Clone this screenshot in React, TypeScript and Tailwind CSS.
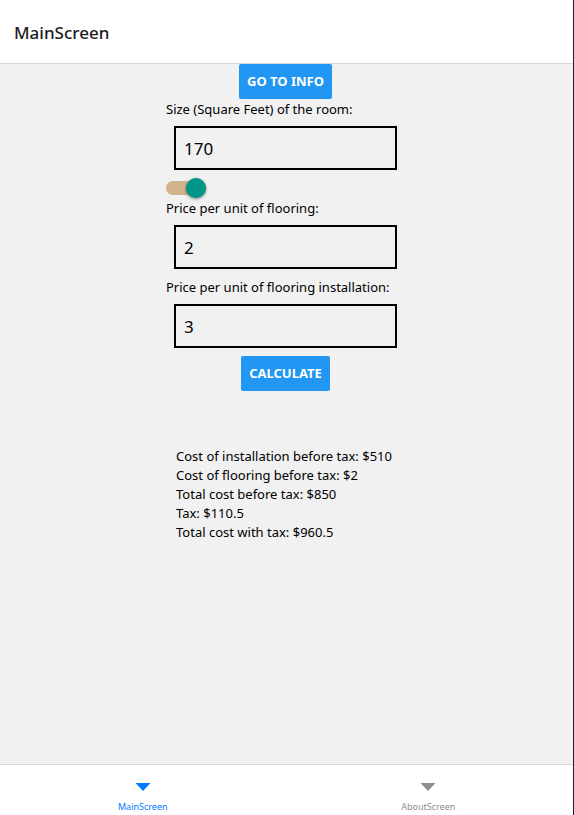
import { useState } from "react";

type FieldProps = { id: string; label: string; value: string; onChange: (v: string) => void };

function Field({ id, label, value, onChange }: FieldProps) {
  return (
    <div className="flex flex-col">
      <label htmlFor={id} className="text-[13px] leading-5 whitespace-nowrap">
        {label}
      </label>
      <input
        id={id}
        type="text"
        inputMode="decimal"
        value={value}
        onChange={(e) => onChange(e.target.value)}
        className="mx-2 mt-[7px] mb-2 h-11 border-2 border-black bg-transparent px-2 text-[17px] outline-none"
      />
    </div>
  );
}

function ActionButton({ children, onClick }: { children: string; onClick?: () => void }) {
  return (
    <button
      type="button"
      onClick={onClick}
      className="self-center rounded-xs bg-[#2196f3] p-2 text-[13px] leading-[19px] font-bold text-white uppercase"
    >
      {children}
    </button>
  );
}

function Tab({ label, active }: { label: string; active?: boolean }) {
  return (
    <a
      href={"#" + label}
      className={
        "flex flex-1 flex-col items-center gap-2 pt-[18px] " + (active ? "text-[#007aff]" : "text-[#8e8e8f]")
      }
    >
      <svg width="16" height="8" viewBox="0 0 16 8" fill="currentColor" aria-hidden="true">
        <path d="M0.5 0H15.5L8 8Z" />
      </svg>
      <span className="text-[9px] leading-4">{label}</span>
    </a>
  );
}

export default function App() {
  const [size, setSize] = useState("170");
  const [price, setPrice] = useState("2");
  const [install, setInstall] = useState("3");
  const [on, setOn] = useState(true);

  return (
    <div className="flex min-h-screen flex-col border-r border-[#202124] bg-[#f1f1f1] font-['Noto_Sans','Open_Sans',sans-serif] text-black">
      <header className="flex h-16 items-center border-b border-[#d8d8d8] bg-white px-3.5 pt-0.5">
        <h1 className="text-[17px] font-medium text-[#1c1c1e]">MainScreen</h1>
      </header>

      <main className="flex flex-1 flex-col items-center pr-0.5">
        <div className="flex w-[239px] flex-col">
          <ActionButton>Go to info</ActionButton>
          <Field id="size" label="Size (Square Feet) of the room:" value={size} onChange={setSize} />
          <label className="relative flex h-5 w-10 items-center">
            <input
              type="checkbox"
              role="switch"
              aria-label="Include installation"
              checked={on}
              onChange={(e) => setOn(e.target.checked)}
              className="peer h-3.5 w-full appearance-none rounded-full bg-[#939393] checked:bg-[#d2b48c]"
            />
            <span className="absolute left-0 size-5 rounded-full bg-[#fafafa] shadow-[0_1px_3px_rgba(0,0,0,0.5)] peer-checked:left-5 peer-checked:bg-[#009688]" />
          </label>
          <Field id="price" label="Price per unit of flooring:" value={price} onChange={setPrice} />
          <Field id="install" label="Price per unit of flooring installation:" value={install} onChange={setInstall} />
          <ActionButton>Calculate</ActionButton>
          <div className="mt-14 pl-2.5 text-[13px] leading-[19px] whitespace-nowrap">
            <p>Cost of installation before tax: $510</p>
            <p>Cost of flooring before tax: $2</p>
            <p>Total cost before tax: $850</p>
            <p>Tax: $110.5</p>
            <p>Total cost with tax: $960.5</p>
          </div>
        </div>
      </main>

      <nav className="flex h-[51px] border-t border-[#d8d8d8] bg-white pr-0.5">
        <Tab label="MainScreen" active />
        <Tab label="AboutScreen" />
      </nav>
    </div>
  );
}
